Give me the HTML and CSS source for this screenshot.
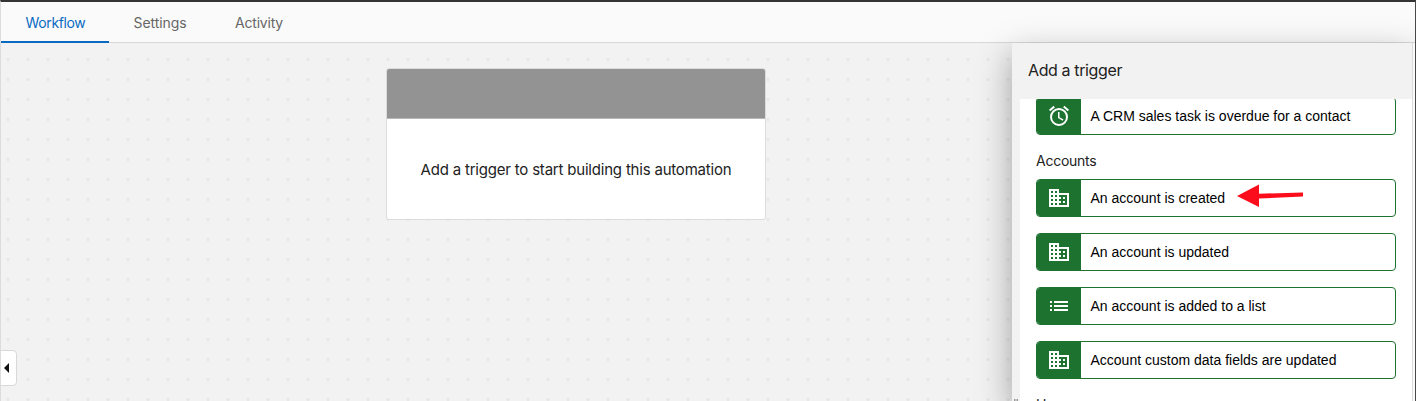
FILE: index.html
```html
<!DOCTYPE html>
<html lang="en">
<head>
<meta charset="utf-8">
<title>Workflow</title>
<link rel="stylesheet" href="styles.css">
</head>
<body>
<svg class="defs" aria-hidden="true">
  <symbol id="building" viewBox="0 0 24 24"><path d="M12 7V3H2v18h20V7H12zM6 19H4v-2h2v2zm0-4H4v-2h2v2zm0-4H4V9h2v2zm0-4H4V5h2v2zm4 12H8v-2h2v2zm0-4H8v-2h2v2zm0-4H8V9h2v2zm0-4H8V5h2v2zm10 12h-8v-2h2v-2h-2v-2h2v-2h-2V9h8v10zm-2-8h-2v2h2v-2zm0 4h-2v2h2v-2z"/></symbol>
  <symbol id="alarm" viewBox="0 0 24 24"><path d="M22 5.7l-4.600-3.860-1.290 1.530 4.600 3.860L22 5.700zM7.880 3.390L6.600 1.860 2 5.710l1.290 1.530 4.590-3.850zM12.500 8H11v6l4.750 2.850.75-1.230-4-2.370V8zM12 4a9 9 0 1 0 0 18 9 9 0 0 0 0-18zm0 16a7 7 0 1 1 0-14 7 7 0 0 1 0 14z"/></symbol>
  <symbol id="list" viewBox="0 0 24 24"><path d="M3 13h2v-2H3v2zm0 4h2v-2H3v2zm0-8h2V7H3v2zm4 4h14v-2H7v2zm0 4h14v-2H7v2zM7 7v2h14V7H7z"/></symbol>
</svg>
<div class="app">
  <nav class="tabs">
    <a class="tab active">Workflow</a>
    <a class="tab settings">Settings</a>
    <a class="tab">Activity</a>
  </nav>
  <main class="workspace">
    <section class="canvas">
      <div class="start-card">
        <div class="start-head"></div>
        <div class="start-body">Add a trigger to start building this automation</div>
      </div>
    </section>
    <aside class="panel">
      <h2 class="panel-title">Add a trigger</h2>
      <div class="panel-list">
        <div class="trigger first"><span class="icon"><svg><use href="#alarm"/></svg></span><span class="name">A CRM sales task is overdue for a contact</span></div>
        <h3 class="group">Accounts</h3>
        <div class="trigger"><span class="icon"><svg><use href="#building"/></svg></span><span class="name">An account is created</span>
          <svg class="arrow" viewBox="0 0 68 24"><path d="M1 12 23 0.500V9.700L67 8.500V12.500L23 14.500V23z"/></svg></div>
        <div class="trigger"><span class="icon"><svg><use href="#building"/></svg></span><span class="name">An account is updated</span></div>
        <div class="trigger"><span class="icon"><svg><use href="#list"/></svg></span><span class="name">An account is added to a list</span></div>
        <div class="trigger"><span class="icon"><svg><use href="#building"/></svg></span><span class="name">Account custom data fields are updated</span></div>
        <h3 class="group">Users</h3>
      </div>
      <span class="grip"></span>
    </aside>
    <div class="edge"></div>
    <button class="drawer" aria-label="Expand"></button>
  </main>
</div>
</body>
</html>
```
FILE: styles.css
```css
* { box-sizing: border-box; }
body { margin: 0; overflow: hidden; font-family: Inter, sans-serif; }
.defs { display: none; }
.app {
  width: 1416px; height: 401px; overflow: hidden;
  display: flex; flex-direction: column;
  border-top: 2px solid #353333; border-left: 1px solid #dcdcdc; border-right: 1px solid #484848;
  background: #f9f9f9;
}
.tabs { flex: none; height: 41px; display: flex; background: #fafafa; border-bottom: 1px solid #d8d8d8; }
.tab { height: 41px; padding: 0 24px; font-size: 14px; line-height: 42px; letter-spacing: -.2px; color: #666; white-space: nowrap; }
.tab.active { color: #0a6ac2; width: 108px; padding-left: 24.5px; letter-spacing: -.36px; border-bottom: 2px solid #0a6ac2; }
.tab.settings { width: 102px; padding-left: 24.5px; letter-spacing: -.05px; }
.workspace { flex: 1; min-height: 0; display: flex; position: relative; }
.canvas {
  width: 1011px; display: flex; justify-content: center; align-items: flex-start;
  padding: 25px 0 0 139px; background: #f2f2f2 radial-gradient(circle at 7px 16.500px, #e7e7e7 1.300px, transparent 1.900px) 0 0 / 20px 20px;
}
.start-card { width: 380px; height: 152px; border: 1px solid #dcdcdc; border-radius: 3px; background: #fff; overflow: hidden; }
.start-head { height: 50px; background: #939393; border-bottom: 1px solid #b8b8b8; }
.start-body { height: 100px; display: flex; align-items: center; justify-content: center; font-size: 15px; letter-spacing: -.2px; color: #222; white-space: nowrap; }
.panel {
  width: 401px; position: relative; display: flex; flex-direction: column;
  padding-left: 8px; background: #f2f2f2; border-right: 1px solid #dcdcdc;
  box-shadow: 0 12px 32px rgba(0,0,0,.35);
}
.edge { position: relative; width: 2px; background: #fafafa; }
.panel-title { margin: 0; flex: none; height: 56px; padding-left: 8px; font-size: 16px; font-weight: 400; line-height: 55px; letter-spacing: -.38px; color: #222; }
.panel-list { flex: 1; min-height: 0; overflow: hidden; padding: 0 16px; background: #fff; }
.trigger {
  height: 38px; width: 360px; margin-bottom: 16px; display: flex; position: relative;
  border: 1px solid #1d7230; border-radius: 4px; overflow: hidden; background: #fff;
}
.trigger.first { margin-top: -2px; }
.icon { width: 44px; display: flex; align-items: center; justify-content: center; background: #1d7230; }
.icon svg { width: 24px; height: 24px; fill: #fff; }
.name { padding-left: 9.5px; font: 14px/36px "Liberation Sans", Arial, sans-serif; color: #000; white-space: nowrap; }
.arrow { position: absolute; left: 199px; top: 4px; width: 68px; height: 24px; fill: #fb0d1b; }
.group { margin: 0; height: 28px; font-size: 14px; font-weight: 400; line-height: 20px; letter-spacing: -.25px; color: #222; }
/* resize grip on the panel's left edge */
.grip { position: absolute; left: 2px; bottom: 0; width: 4px; height: 2px; border: 1px solid #999; border-width: 0 1px; background: #c4c4c4; }
.drawer {
  position: absolute; left: -1px; top: 307px; width: 17px; height: 36px; padding: 0;
  display: flex; align-items: center; justify-content: center;
  border: 1px solid #d8d8d8; border-radius: 0 4px 4px 0; background: #fff;
}
.drawer::before { content: ""; border: 5px solid transparent; border-right-color: #111; border-left: 0; margin-right: 5px; }
```
